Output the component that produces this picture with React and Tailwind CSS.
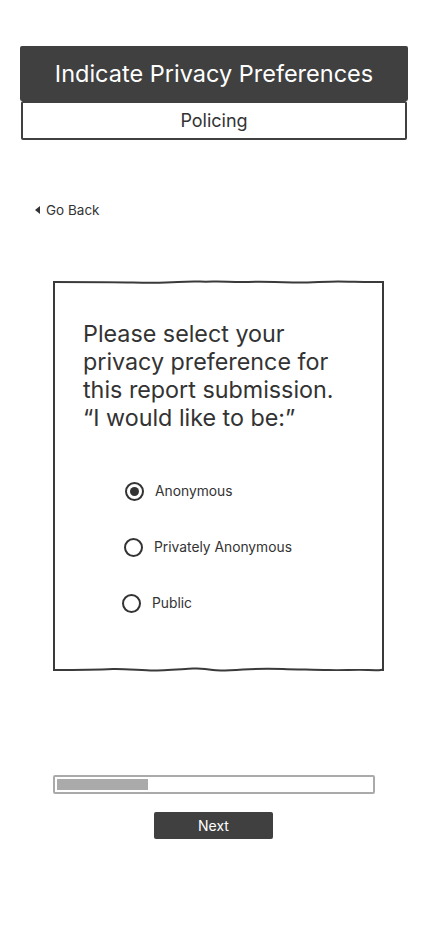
export default function App() {
  const options = [
    { label: "Anonymous", checked: true, x: "ml-[70px]" },
    { label: "Privately Anonymous", checked: false, x: "ml-[69px]" },
    { label: "Public", checked: false, x: "ml-[67px]" },
  ];
  return (
    <div className="w-[428px] h-[926px] bg-white text-[#333] font-['Inter','Liberation_Sans',sans-serif]">
      <div className="pt-[46px] px-[20px]">
        <div className="h-[55px] bg-[#404040] rounded-[2px] flex items-center justify-center text-white text-[23.5px]">
          Indicate Privacy Preferences
        </div>
        <div className="mx-[1px] h-[39px] border-2 border-[#404040] rounded-[2px] flex items-center justify-center text-[18px] text-[#333]">
          Policing
        </div>
      </div>
      <div className="mt-[60px] ml-[35px] flex items-center gap-[6px] text-[13.5px] text-[#333] h-[20px]">
        <span className="w-0 h-0 border-y-[4px] border-y-transparent border-r-[5px] border-r-[#333]"></span>
        <span>Go Back</span>
      </div>
      <div className="mt-[61px] ml-[53px] w-[331px] h-[390px] border-x-2 border-[#3a3a3a] relative">
        <svg className="absolute left-[-2px] top-[-2px]" width="331" height="6" viewBox="0 0 331 6">
          <path d="M0 3 C 30 3, 60 3, 80 3.5 S 110 4, 125 3 S 150 3, 160 2.5 S 180 3.5, 195 3 S 225 3, 240 3.5 S 270 2.5, 285 2.5 S 310 3.5, 331 3" fill="none" stroke="#3a3a3a" strokeWidth="2" />
        </svg>
        <svg className="absolute left-[-2px] bottom-[-3px]" width="331" height="8" viewBox="0 0 331 8">
          <path d="M0 4 C 30 4, 50 3.5, 60 3 S 90 4.5, 100 4.5 S 130 3, 140 2.5 S 155 3, 160 4 S 175 4.5, 190 3.5 S 215 2.5, 230 3 S 260 3.5, 275 4 S 300 3.5, 315 4 S 325 4, 331 3.5" fill="none" stroke="#3a3a3a" strokeWidth="2" />
        </svg>
        <div className="pt-[39px] pl-[28px] text-[23.3px] leading-[28px] text-[#333]">
          Please select your<br />
          privacy preference for<br />
          this report submission.<br />
          “I would like to be:”
        </div>
        <div className="mt-[50px] flex flex-col gap-[37px]">
          {options.map((o) => (
            <div key={o.label} className={`flex items-center gap-[11px] h-[19px] ${o.x}`}>
              <span className="w-[19px] h-[19px] rounded-full border-2 border-[#333] flex items-center justify-center">
                {o.checked && <span className="w-[9px] h-[9px] rounded-full bg-[#333]"></span>}
              </span>
              <span className="text-[13.8px] text-[#333]">{o.label}</span>
            </div>
          ))}
        </div>
      </div>
      <div className="mt-[104px] ml-[53px] w-[322px] h-[19px] border-2 border-[#aaa] rounded-[2px] p-[2px]">
        <div className="w-[91px] h-full bg-[#aaa]"></div>
      </div>
      <div className="mt-[18px] ml-[154px] w-[119px] h-[27px] bg-[#404040] rounded-[2px] flex items-center justify-center text-white text-[14px]">
        Next
      </div>
    </div>
  );
}
